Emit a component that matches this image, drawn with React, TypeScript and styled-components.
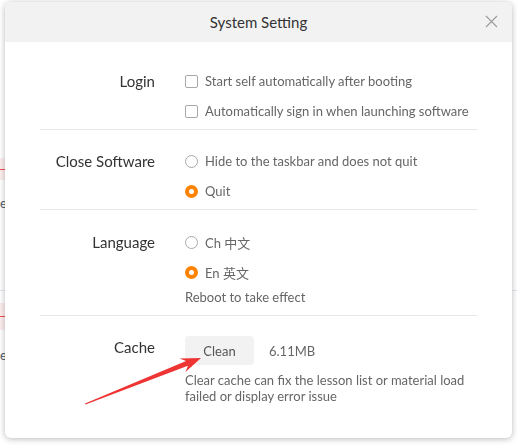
import React, { useState } from 'react';
import styled, { createGlobalStyle } from 'styled-components';

const GlobalStyle = createGlobalStyle`
  html, body {
    margin: 0;
    padding: 0;
    background: #ffffff;
  }
  body {
    font-family: Lato, "Noto Sans CJK SC", sans-serif;
  }
`;

// the app page that sits behind the modal
const Backdrop = styled('div')`
  height: 447px;
  overflow: hidden;
  display: flex;
  flex-direction: column;
  padding-top: 158px;
  box-sizing: border-box;
`;

const BgRow = styled('div')<{ $tint?: string; $mark?: string; $h: number }>`
  width: 300px;
  height: ${(p) => p.$h}px;
  background: ${(p) => p.$tint || 'transparent'};
  display: flex;
  align-items: center;
  font-size: 13px;
  color: #556070;
  & > i {
    display: block;
    width: 6px;
    height: 1px;
    background: ${(p) => p.$mark || 'transparent'};
  }
`;

const BgLine = styled('div')`
  height: 1px;
  background: #dfe8f2;
`;

const Modal = styled('div')`
  position: fixed;
  left: 5px;
  top: 2px;
  width: 507px;
  height: 436px;
  background: #ffffff;
  border-radius: 6px;
  box-shadow: 0 1px 6px rgba(0, 0, 0, 0.28);
  overflow: hidden;
  display: flex;
  flex-direction: column;
`;

const Header = styled('div')`
  position: relative;
  height: 40px;
  flex-shrink: 0;
  background: #f2f2f2;
  display: flex;
  align-items: center;
  justify-content: center;
  font-size: 15px;
  color: #333333;
`;

const CloseBtn = styled('button')`
  position: absolute;
  right: 14px;
  top: 13px;
  width: 13px;
  height: 13px;
  padding: 0;
  border: none;
  background: transparent;
  cursor: pointer;
  display: flex;
`;

const Body = styled('div')`
  padding: 8px 35px 0;
  display: flex;
  flex-direction: column;
`;

const Section = styled('div')<{ $top: number; $bottom: number; $last?: boolean }>`
  display: grid;
  grid-template-columns: 115px 1fr;
  column-gap: 30px;
  padding: ${(p) => p.$top}px 0 ${(p) => p.$bottom}px;
  border-bottom: ${(p) => (p.$last ? 'none' : '1px solid #e6e6e6')};
`;

const Label = styled('div')`
  text-align: right;
  font-size: 15px;
  line-height: 30px;
  color: #333333;
  white-space: nowrap;
`;

const Options = styled('div')`
  display: flex;
  flex-direction: column;
`;

const Option = styled('label')`
  height: 30px;
  display: flex;
  align-items: center;
  gap: 7px;
  font-size: 13px;
  color: #666666;
  white-space: nowrap;
  cursor: pointer;
`;

const Box = styled('span')`
  width: 13px;
  height: 13px;
  box-sizing: border-box;
  border: 1px solid #a8a8a8;
  border-radius: 2px;
  background: #fff;
  flex-shrink: 0;
`;

const Radio = styled('span')<{ $on: boolean }>`
  width: 13px;
  height: 13px;
  box-sizing: border-box;
  border-radius: 50%;
  border: ${(p) => (p.$on ? '4px solid #ff8200' : '1px solid #a8a8a8')};
  background: #fff;
  flex-shrink: 0;
`;

const Note = styled('div')<{ $w?: number; $lh: number }>`
  font-size: 13px;
  line-height: ${(p) => p.$lh}px;
  color: #666666;
  max-width: ${(p) => (p.$w ? `${p.$w}px` : 'none')};
`;

const CacheRow = styled('div')`
  margin-top: 4px;
  display: flex;
  align-items: center;
  gap: 15px;
  font-size: 13px;
  color: #666666;
`;

const CleanButton = styled('button')`
  width: 69px;
  height: 29px;
  border: none;
  border-radius: 4px;
  background: #f2f2f2;
  font-family: inherit;
  font-size: 13px;
  color: #555555;
  cursor: pointer;
`;

const Arrow = styled('svg')`
  position: fixed;
  left: 0;
  top: 0;
  pointer-events: none;
`;

const App: React.FC = () => {
  const [autoStart, setAutoStart] = useState(false);
  const [autoSign, setAutoSign] = useState(false);
  const [closeMode, setCloseMode] = useState<'hide' | 'quit'>('quit');
  const [lang, setLang] = useState<'ch' | 'en'>('en');

  return (
    <>
      <GlobalStyle />
      <Backdrop>
        <BgRow $h={22} $tint="#fdeeee" $mark="#f05050">
          <i />
        </BgRow>
        <BgRow $h={46}>e</BgRow>
        <BgRow $h={64} />
        <BgLine />
        <BgRow $h={12} />
        <BgRow $h={27} $tint="#fdeeee" $mark="#f05050">
          <i />
        </BgRow>
        <BgRow $h={50}>e</BgRow>
      </Backdrop>

      <Modal>
        <Header>
          System Setting
          <CloseBtn aria-label="close">
            <svg width="13" height="13" viewBox="0 0 13 13">
              <path d="M1 1L12 12M12 1L1 12" stroke="#9a9a9a" strokeWidth="1.1" />
            </svg>
          </CloseBtn>
        </Header>
        <Body>
          <Section $top={16} $bottom={3}>
            <Label>Login</Label>
            <Options>
              <Option onClick={() => setAutoStart(!autoStart)}>
                <Box />
                Start self automatically after booting
              </Option>
              <Option onClick={() => setAutoSign(!autoSign)}>
                <Box />
                Automatically sign in when launching software
              </Option>
            </Options>
          </Section>

          <Section $top={16} $bottom={3}>
            <Label>Close Software</Label>
            <Options>
              <Option onClick={() => setCloseMode('hide')}>
                <Radio $on={closeMode === 'hide'} />
                Hide to the taskbar and does not quit
              </Option>
              <Option onClick={() => setCloseMode('quit')}>
                <Radio $on={closeMode === 'quit'} />
                Quit
              </Option>
            </Options>
          </Section>

          <Section $top={17} $bottom={8}>
            <Label>Language</Label>
            <Options>
              <Option onClick={() => setLang('ch')}>
                <Radio $on={lang === 'ch'} />
                Ch 中文
              </Option>
              <Option onClick={() => setLang('en')}>
                <Radio $on={lang === 'en'} />
                En 英文
              </Option>
              <Note $lh={20}>Reboot to take effect</Note>
            </Options>
          </Section>

          <Section $top={16} $bottom={0} $last>
            <Label>Cache</Label>
            <Options>
              <CacheRow>
                <CleanButton>Clean</CleanButton>
                6.11MB
              </CacheRow>
              <Note $lh={16} $w={290} style={{ marginTop: 7 }}>
                Clear cache can fix the lesson list or material load failed or display error issue
              </Note>
            </Options>
          </Section>
        </Body>
      </Modal>

      <Arrow width="517" height="447" viewBox="0 0 517 447">
        <polygon
          points="85,403.5 186.1,361.1 179.5,358.5 201,358 185.5,372 187.9,365.7 85.5,404.5"
          fill="#ef3434"
        />
      </Arrow>
    </>
  );
};

export default App;
